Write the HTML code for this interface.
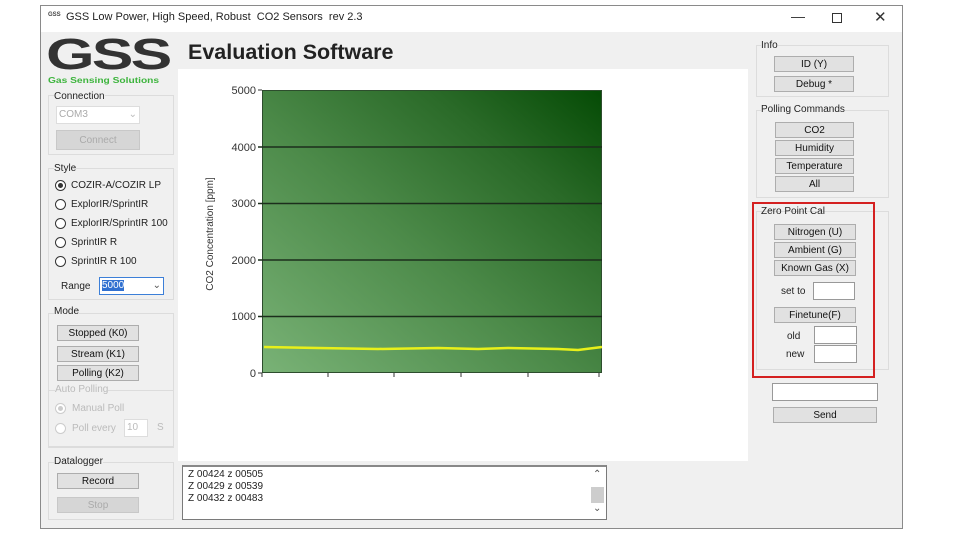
<!DOCTYPE html>
<html><head><style>
*{margin:0;padding:0;box-sizing:border-box}
body{width:957px;height:537px;background:#fff;position:relative;overflow:hidden;font-family:"Liberation Sans",sans-serif;font-size:10px;color:#111}
.a{position:absolute}
.win{left:40px;top:5px;width:863px;height:524px;border:1px solid #8a8a8a;background:#f0f0f0}
.btn{position:absolute;background:#e1e1e1;border:1px solid #adadad;font-size:10px;color:#111;display:flex;align-items:center;justify-content:center}
.dis{color:#aaa;background:#d6d6d6;border-color:#c8c8c8}
.grp{position:absolute;border:1px solid #dcdcdc}
.lbl{position:absolute;font-size:10px;color:#222;white-space:nowrap}
.rad{position:absolute;width:11px;height:11px;border:1px solid #333;border-radius:50%;background:#fff}
.tb{position:absolute;background:#fff;border:1px solid #7a7a7a}
</style></head><body>
<div class="a win"></div>
<div class="a" style="left:41px;top:6px;width:861px;height:26px;background:#fff"></div>
<div class="lbl" style="left:48px;top:12px;font-size:6px;font-weight:bold;color:#444">GSS</div>
<div class="lbl" style="left:66px;top:11px;font-size:11px;color:#222">GSS Low Power, High Speed, Robust&nbsp; CO2 Sensors&nbsp; rev 2.3</div>
<div class="lbl" style="left:791px;top:8px;font-size:14px;color:#333">—</div>
<div class="a" style="left:832px;top:13px;width:10px;height:10px;border:1px solid #333"></div>
<div class="lbl" style="left:874px;top:8px;font-size:15px;color:#333">✕</div>

<!-- logo -->
<div class="lbl" style="left:46px;top:32px;font-size:44px;font-weight:900;color:#333;letter-spacing:-2px;line-height:46px;transform:scaleX(1.42);transform-origin:left">GSS</div>
<div class="lbl" style="left:48px;top:75px;font-size:8.5px;font-weight:bold;color:#3cb43c;transform:scaleX(1.2);transform-origin:left">Gas Sensing Solutions</div>
<div class="lbl" style="left:188px;top:40px;font-size:21.5px;font-weight:bold;color:#222">Evaluation Software</div>

<!-- connection -->
<div class="grp" style="left:48px;top:95px;width:126px;height:60px"></div>
<div class="lbl" style="left:54px;top:91px;background:#f0f0f0">Connection</div>
<div class="tb" style="left:56px;top:106px;width:84px;height:18px;border-color:#ddd;color:#aaa;padding:2px 2px">COM3<span style="float:right;color:#bbb">⌄</span></div>
<div class="btn dis" style="left:56px;top:130px;width:84px;height:20px">Connect</div>

<!-- style -->
<div class="grp" style="left:48px;top:168px;width:126px;height:132px"></div>
<div class="lbl" style="left:54px;top:163px;background:#f0f0f0">Style</div>
<div class="rad" style="left:55px;top:180px"></div><div class="a" style="left:58px;top:183px;width:5px;height:5px;border-radius:50%;background:#333"></div>
<div class="lbl" style="left:71px;top:180px">COZIR-A/COZIR LP</div>
<div class="rad" style="left:55px;top:199px"></div><div class="lbl" style="left:71px;top:199px">ExplorIR/SprintIR</div>
<div class="rad" style="left:55px;top:218px"></div><div class="lbl" style="left:71px;top:218px">ExplorIR/SprintIR 100</div>
<div class="rad" style="left:55px;top:237px"></div><div class="lbl" style="left:71px;top:237px">SprintIR R</div>
<div class="rad" style="left:55px;top:256px"></div><div class="lbl" style="left:71px;top:256px">SprintIR R 100</div>
<div class="lbl" style="left:61px;top:281px">Range</div>
<div class="tb" style="left:99px;top:277px;width:65px;height:18px;border-color:#3c7fd8;padding:2px"><span style="background:#3070d0;color:#fff">5000</span><span style="float:right;color:#555">⌄</span></div>

<!-- mode -->
<div class="grp" style="left:48px;top:313px;width:126px;height:135px"></div>
<div class="lbl" style="left:54px;top:306px;background:#f0f0f0">Mode</div>
<div class="btn" style="left:57px;top:325px;width:82px;height:16px">Stopped (K0)</div>
<div class="btn" style="left:57px;top:346px;width:82px;height:16px">Stream (K1)</div>
<div class="btn" style="left:57px;top:365px;width:82px;height:16px">Polling (K2)</div>
<div class="grp" style="left:48px;top:390px;width:126px;height:57px"></div>
<div class="lbl" style="left:55px;top:384px;color:#bbb;background:#f0f0f0">Auto Polling</div>
<div class="rad" style="left:55px;top:403px;border-color:#ccc"></div><div class="a" style="left:58px;top:406px;width:5px;height:5px;border-radius:50%;background:#ccc"></div>
<div class="lbl" style="left:72px;top:403px;color:#bbb">Manual Poll</div>
<div class="rad" style="left:55px;top:423px;border-color:#ccc"></div>
<div class="lbl" style="left:72px;top:423px;color:#bbb">Poll every</div>
<div class="tb" style="left:124px;top:419px;width:24px;height:18px;border-color:#ddd;color:#bbb;padding:2px">10</div>
<div class="lbl" style="left:157px;top:422px;color:#bbb">S</div>

<!-- datalogger -->
<div class="grp" style="left:48px;top:462px;width:126px;height:58px"></div>
<div class="lbl" style="left:54px;top:456px;background:#f0f0f0">Datalogger</div>
<div class="btn" style="left:57px;top:473px;width:82px;height:16px">Record</div>
<div class="btn dis" style="left:57px;top:497px;width:82px;height:16px">Stop</div>

<!-- chart -->
<div class="a" style="left:178px;top:69px;width:570px;height:392px;background:#fff"></div>
<div class="a" style="left:262px;top:90px;width:340px;height:283px;border:1px solid #2d4d2d;background:linear-gradient(to top right,#79b276 0%,#4c8a49 45%,#2a6a28 75%,#054b05 100%)"></div>
<svg class="a" style="left:178px;top:69px" width="570" height="392">
<g stroke="#1c2e1c" stroke-width="1.5">
<line x1="80" y1="78" x2="424" y2="78"/><line x1="80" y1="134.5" x2="424" y2="134.5"/><line x1="80" y1="191" x2="424" y2="191"/><line x1="80" y1="247.5" x2="424" y2="247.5"/>
</g>
<g stroke="#333" stroke-width="1"><line x1="80" y1="21" x2="84" y2="21"/><line x1="80" y1="304" x2="84" y2="304"/>
<line x1="84" y1="304" x2="84" y2="308"/><line x1="150" y1="304" x2="150" y2="308"/><line x1="216" y1="304" x2="216" y2="308"/><line x1="283" y1="304" x2="283" y2="308"/><line x1="350" y1="304" x2="350" y2="308"/><line x1="421" y1="304" x2="421" y2="308"/></g>
<polyline fill="none" stroke="#e8f01a" stroke-width="2.5" points="86,278 140,279 200,280 260,279 300,280 330,279 380,280 400,281 424,278"/>
<g font-family="Liberation Sans" font-size="11" fill="#333" text-anchor="end">
<text x="78" y="25">5000</text><text x="78" y="82">4000</text><text x="78" y="138">3000</text><text x="78" y="195">2000</text><text x="78" y="251">1000</text><text x="78" y="308">0</text></g>
<text transform="translate(35,165) rotate(-90)" font-family="Liberation Sans" font-size="10" fill="#333" text-anchor="middle">CO2 Concentration [ppm]</text>
</svg>

<!-- log -->
<div class="tb" style="left:182px;top:465px;width:425px;height:55px;border-top:2px solid #888;padding:2px 5px;font-size:10px;line-height:12px;color:#222">Z 00424 z 00505<br>Z 00429 z 00539<br>Z 00432 z 00483</div>
<div class="lbl" style="left:593px;top:469px;color:#555">⌃</div>
<div class="a" style="left:591px;top:487px;width:13px;height:16px;background:#cdcdcd"></div>
<div class="lbl" style="left:593px;top:503px;color:#555">⌄</div>

<!-- right panel -->
<div class="grp" style="left:756px;top:45px;width:133px;height:52px"></div>
<div class="lbl" style="left:761px;top:40px;background:#f0f0f0">Info</div>
<div class="btn" style="left:774px;top:56px;width:80px;height:16px">ID (Y)</div>
<div class="btn" style="left:774px;top:76px;width:80px;height:16px">Debug *</div>
<div class="grp" style="left:756px;top:110px;width:133px;height:88px"></div>
<div class="lbl" style="left:761px;top:104px;background:#f0f0f0">Polling Commands</div>
<div class="btn" style="left:775px;top:122px;width:79px;height:16px">CO2</div>
<div class="btn" style="left:775px;top:140px;width:79px;height:16px">Humidity</div>
<div class="btn" style="left:775px;top:158px;width:79px;height:16px">Temperature</div>
<div class="btn" style="left:775px;top:176px;width:79px;height:16px">All</div>
<div class="grp" style="left:756px;top:211px;width:133px;height:159px"></div>
<div class="a" style="left:752px;top:202px;width:123px;height:176px;border:2px solid #d42020"></div>
<div class="lbl" style="left:761px;top:206px">Zero Point Cal</div>
<div class="btn" style="left:774px;top:224px;width:82px;height:16px">Nitrogen (U)</div>
<div class="btn" style="left:774px;top:242px;width:82px;height:16px">Ambient (G)</div>
<div class="btn" style="left:774px;top:260px;width:82px;height:16px">Known Gas (X)</div>
<div class="lbl" style="left:781px;top:286px">set to</div>
<div class="tb" style="left:813px;top:282px;width:42px;height:18px;border-color:#999"></div>
<div class="btn" style="left:774px;top:307px;width:82px;height:16px">Finetune(F)</div>
<div class="lbl" style="left:787px;top:331px">old</div>
<div class="tb" style="left:814px;top:326px;width:43px;height:18px;border-color:#999"></div>
<div class="lbl" style="left:786px;top:349px">new</div>
<div class="tb" style="left:814px;top:345px;width:43px;height:18px;border-color:#999"></div>
<div class="tb" style="left:772px;top:383px;width:106px;height:18px;border-color:#999"></div>
<div class="btn" style="left:773px;top:407px;width:104px;height:16px">Send</div>
</body></html>
